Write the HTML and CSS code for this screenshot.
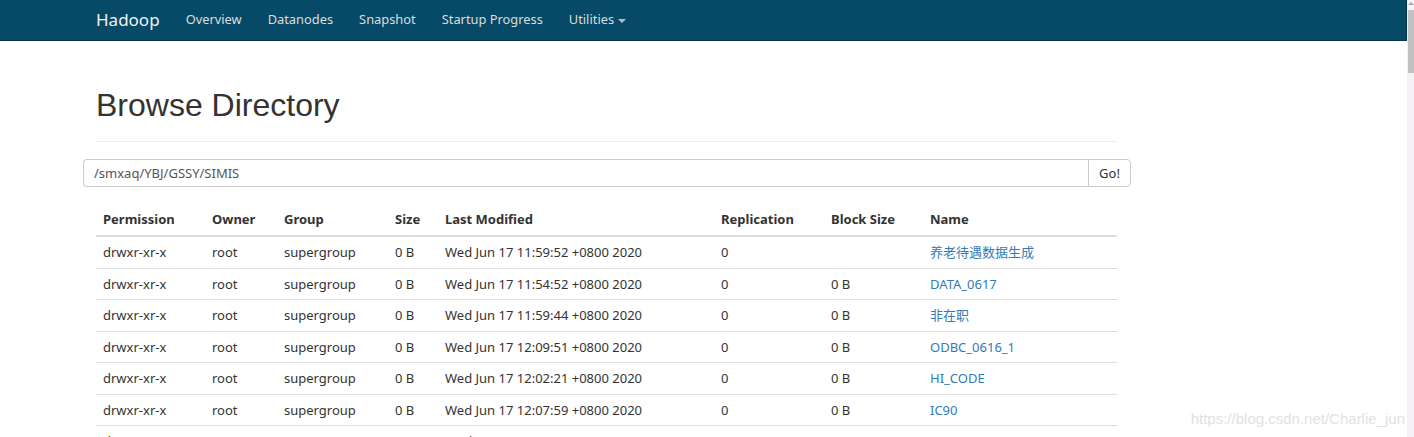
FILE: index.html
```html
<!DOCTYPE html>
<html lang="en">
<head>
<meta charset="utf-8">
<title>Browsing HDFS</title>
<link rel="stylesheet" href="styles.css">
</head>
<body>
<div class="page">
  <div class="main">
    <header class="navbar">
      <div class="nav-inner">
        <a class="brand" href="#">Hadoop</a>
        <a class="nav-link" href="#">Overview</a>
        <a class="nav-link" href="#">Datanodes</a>
        <a class="nav-link" href="#">Snapshot</a>
        <a class="nav-link" href="#">Startup Progress</a>
        <a class="nav-link" href="#">Utilities <span class="caret"></span></a>
      </div>
    </header>
    <div class="container">
      <div class="page-header">
        <h1>Browse Directory</h1>
      </div>
      <form class="input-group">
        <input class="path-input" type="text" value="/smxaq/YBJ/GSSY/SIMIS">
        <button class="go-btn" type="button">Go!</button>
      </form>
      <table class="dir-table">
        <colgroup>
          <col class="c-perm"><col class="c-owner"><col class="c-group"><col class="c-size">
          <col class="c-mod"><col class="c-repl"><col class="c-block"><col class="c-name">
        </colgroup>
        <thead>
          <tr><th>Permission</th><th>Owner</th><th>Group</th><th>Size</th><th>Last Modified</th><th>Replication</th><th>Block Size</th><th>Name</th></tr>
        </thead>
        <tbody>
          <tr><td>drwxr-xr-x</td><td>root</td><td>supergroup</td><td>0 B</td><td>Wed Jun 17 11:59:52 +0800 2020</td><td>0</td><td></td><td><a href="#">养老待遇数据生成</a></td></tr>
          <tr><td>drwxr-xr-x</td><td>root</td><td>supergroup</td><td>0 B</td><td>Wed Jun 17 11:54:52 +0800 2020</td><td>0</td><td>0 B</td><td><a href="#">DATA_0617</a></td></tr>
          <tr><td>drwxr-xr-x</td><td>root</td><td>supergroup</td><td>0 B</td><td>Wed Jun 17 11:59:44 +0800 2020</td><td>0</td><td>0 B</td><td><a href="#">非在职</a></td></tr>
          <tr><td>drwxr-xr-x</td><td>root</td><td>supergroup</td><td>0 B</td><td>Wed Jun 17 12:09:51 +0800 2020</td><td>0</td><td>0 B</td><td><a href="#">ODBC_0616_1</a></td></tr>
          <tr><td>drwxr-xr-x</td><td>root</td><td>supergroup</td><td>0 B</td><td>Wed Jun 17 12:02:21 +0800 2020</td><td>0</td><td>0 B</td><td><a href="#">HI_CODE</a></td></tr>
          <tr><td>drwxr-xr-x</td><td>root</td><td>supergroup</td><td>0 B</td><td>Wed Jun 17 12:07:59 +0800 2020</td><td>0</td><td>0 B</td><td><a href="#">IC90</a></td></tr>
          <tr><td>drwxr-xr-x</td><td>root</td><td>supergroup</td><td>0 B</td><td>Wed Jun 17 12:03:11 +0800 2020</td><td>0</td><td>0 B</td><td><a href="#">IC91</a></td></tr>
        </tbody>
      </table>
    </div>
    <div class="watermark">https://blog.csdn.net/Charlie_jun</div>
  </div>
  <div class="scrollbar"><div class="sb-arrow"></div><div class="sb-thumb"></div></div>
</div>
</body>
</html>
```

FILE: styles.css
```css
html, body {
  margin: 0;
  padding: 0;
  height: 437px;
  overflow: hidden;
  background: #fff;
}
body {
  font-family: "Noto Sans", "Noto Sans CJK SC", sans-serif;
  font-size: 13px;
  color: #333;
}
.page {
  display: flex;
  height: 437px;
}
.main {
  flex: 1;
  position: relative;
  overflow: hidden;
}
.scrollbar {
  width: 7px;
  background: #f6f1f6;
  display: flex;
  flex-direction: column;
  align-items: center;
}
.sb-arrow {
  width: 0;
  height: 0;
  border-left: 3px solid transparent;
  border-right: 3px solid transparent;
  border-bottom: 3px solid #a8a8a8;
  margin-top: 2px;
}
.sb-thumb {
  width: 6px;
  height: 63px;
  background: #c1c1c1;
  margin-top: 5px;
}
.navbar {
  height: 40px;
  background: #074a68;
  border-bottom: 1px solid #05344a;
  border-right: 1px solid #05344a;
}
.nav-inner {
  display: flex;
  align-items: center;
  height: 38px;
  padding: 0 0 2px 96px;
}
.brand {
  color: #f2f2f2;
  font-size: 17px;
  text-decoration: none;
  margin-right: 13px;
}
.nav-link {
  color: #dcdcdc;
  text-decoration: none;
  font-size: 12.85px;
  padding: 0 13px;
}
.caret {
  display: inline-block;
  width: 0;
  height: 0;
  border-left: 4px solid transparent;
  border-right: 4px solid transparent;
  border-top: 4px solid #bbb;
  vertical-align: middle;
  margin-left: 1px;
}
.container {
  margin-left: 96px;
  width: 1021px;
}
.page-header {
  border-bottom: 1px solid #eee;
  padding-bottom: 18px;
  margin-top: 47px;
}
h1 {
  margin: 0;
  font-family: "Liberation Sans", Arial, sans-serif;
  font-weight: 400;
  font-size: 32px;
  line-height: 35px;
  color: #333;
}
.input-group {
  display: flex;
  margin: 17px 0 17px -13px;
  width: 1048px;
  height: 28px;
}
.path-input {
  flex: 1;
  border: 1px solid #ccc;
  border-right: none;
  border-radius: 4px 0 0 4px;
  padding: 0 10px;
  font-family: inherit;
  font-size: 13px;
  color: #555;
  outline: none;
  box-sizing: border-box;
  height: 28px;
}
.go-btn {
  width: 43px;
  border: 1px solid #ccc;
  border-radius: 0 4px 4px 0;
  background: #fff;
  font-family: inherit;
  font-size: 13px;
  color: #333;
  padding: 0;
  box-sizing: border-box;
  height: 28px;
}
.dir-table {
  width: 1021px;
  table-layout: fixed;
  border-collapse: collapse;
}
.c-perm { width: 109px; }
.c-owner { width: 72px; }
.c-group { width: 111px; }
.c-size { width: 50px; }
.c-mod { width: 276px; }
.c-repl { width: 110px; }
.c-block { width: 99px; }
.c-name { width: 194px; }
.dir-table th {
  text-align: left;
  font-weight: 700;
  padding: 7px 7px;
  line-height: 17px;
  border-bottom: 2px solid #ddd;
  white-space: nowrap;
}
.dir-table td {
  padding: 7px 7px;
  line-height: 16.5px;
  border-top: 1px solid #ddd;
  white-space: nowrap;
  overflow: hidden;
}
.dir-table a {
  color: #337ab7;
  text-decoration: none;
}
.watermark {
  position: absolute;
  right: 2px;
  top: 410px;
  font-family: "Liberation Sans", Arial, sans-serif;
  font-size: 15px;
  color: #e2e2e2;
}
```
